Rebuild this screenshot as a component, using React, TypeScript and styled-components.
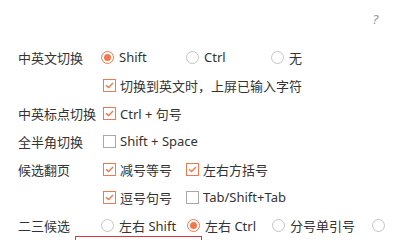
import React from 'react'
import styled, { createGlobalStyle } from 'styled-components'

const Global = createGlobalStyle`
  html, body {
    margin: 0;
    padding: 0;
    background: #fff;
    overflow: hidden;
  }
  body {
    font-family: "Noto Sans", "Noto Sans CJK SC", sans-serif;
    font-size: 13px;
    color: #333;
  }
`

const ORANGE = '#f2784b'

type Opt = { kind: 'radio' | 'check'; label: string; on?: boolean; width?: number }

interface Row {
  label?: string
  options: Opt[]
}

const rows: Row[] = [
  {
    label: '中英文切换',
    options: [
      { kind: 'radio', label: 'Shift', on: true },
      { kind: 'radio', label: 'Ctrl' },
      { kind: 'radio', label: '无' },
    ],
  },
  { options: [{ kind: 'check', label: '切换到英文时，上屏已输入字符', on: true }] },
  { label: '中英标点切换', options: [{ kind: 'check', label: 'Ctrl + 句号', on: true }] },
  { label: '全半角切换', options: [{ kind: 'check', label: 'Shift + Space' }] },
  {
    label: '候选翻页',
    options: [
      { kind: 'check', label: '减号等号', on: true, width: 83 },
      { kind: 'check', label: '左右方括号', on: true },
    ],
  },
  {
    options: [
      { kind: 'check', label: '逗号句号', on: true, width: 83 },
      { kind: 'check', label: 'Tab/Shift+Tab' },
    ],
  },
  {
    label: '二三候选',
    options: [
      { kind: 'radio', label: '左右 Shift', width: 86 },
      { kind: 'radio', label: '左右 Ctrl', on: true },
      { kind: 'radio', label: '分号单引号', width: 100 },
      { kind: 'radio', label: '' },
    ],
  },
]

const App: React.FC = () => {
  return (
    <Page>
      <Global />
      <Header>
        <Help>?</Help>
      </Header>
      <Settings>
        {rows.map((row, i) => (
          <SettingRow key={i}>
            <Label>{row.label}</Label>
            <Options>
              {row.options.map((o, j) => (
                <Option key={j} w={row.options.length === 1 ? undefined : o.width ?? 85}>
                  {o.kind === 'radio' ? (
                    <Radio on={!!o.on} />
                  ) : (
                    <Check on={!!o.on}>
                      {o.on && (
                        <svg width="9" height="7" viewBox="0 0 9 7">
                          <path d="M1 3.2 L3.6 5.6 L8 1" fill="none" stroke={ORANGE} strokeWidth="1.4" />
                        </svg>
                      )}
                    </Check>
                  )}
                  <OptText>{o.label}</OptText>
                </Option>
              ))}
            </Options>
          </SettingRow>
        ))}
      </Settings>
      <RedBox />
    </Page>
  )
}

export default App

const Page = styled.div`
  width: 400px;
  height: 240px;
  overflow: hidden;
`

const Header = styled.div`
  height: 43px;
  display: flex;
  justify-content: flex-end;
  align-items: flex-start;
  padding-right: 21px;
  box-sizing: border-box;
`

const Help = styled.span`
  margin-top: 12px;
  font-size: 13px;
  font-style: italic;
  color: #9a9a9a;
  font-family: "DejaVu Sans", sans-serif;
`

const Settings = styled.div`
  display: flex;
  flex-direction: column;
  padding-left: 18px;
`

const SettingRow = styled.div`
  display: flex;
  align-items: center;
  height: 28px;
  white-space: nowrap;
`

const Label = styled.div`
  width: 83px;
  flex-shrink: 0;
  color: #333;
`

const Options = styled.div`
  display: flex;
  align-items: center;
`

const Option = styled.div<{ w?: number }>`
  display: flex;
  align-items: center;
  width: ${(p) => (p.w ? `${p.w}px` : 'auto')};
  flex-shrink: 0;
`

const Radio = styled.span<{ on: boolean }>`
  width: 13px;
  height: 13px;
  box-sizing: border-box;
  border-radius: 50%;
  border: 1px solid ${(p) => (p.on ? ORANGE : '#c4c4c4')};
  display: flex;
  align-items: center;
  justify-content: center;
  margin-right: 5px;
  flex-shrink: 0;

  &::after {
    content: '';
    width: 7px;
    height: 7px;
    border-radius: 50%;
    background: ${(p) => (p.on ? ORANGE : 'transparent')};
  }
`

const Check = styled.span<{ on: boolean }>`
  width: 13px;
  height: 13px;
  box-sizing: border-box;
  border: 1px solid ${(p) => (p.on ? ORANGE : '#a8a8a8')};
  display: flex;
  align-items: center;
  justify-content: center;
  margin-left: 2px;
  margin-right: 4px;
  flex-shrink: 0;
`

const OptText = styled.span`
  color: #333;
`

const RedBox = styled.div`
  margin-top: -3px;
  margin-left: 75px;
  width: 127px;
  height: 20px;
  box-sizing: border-box;
  border: 1px solid #d9363e;
`
